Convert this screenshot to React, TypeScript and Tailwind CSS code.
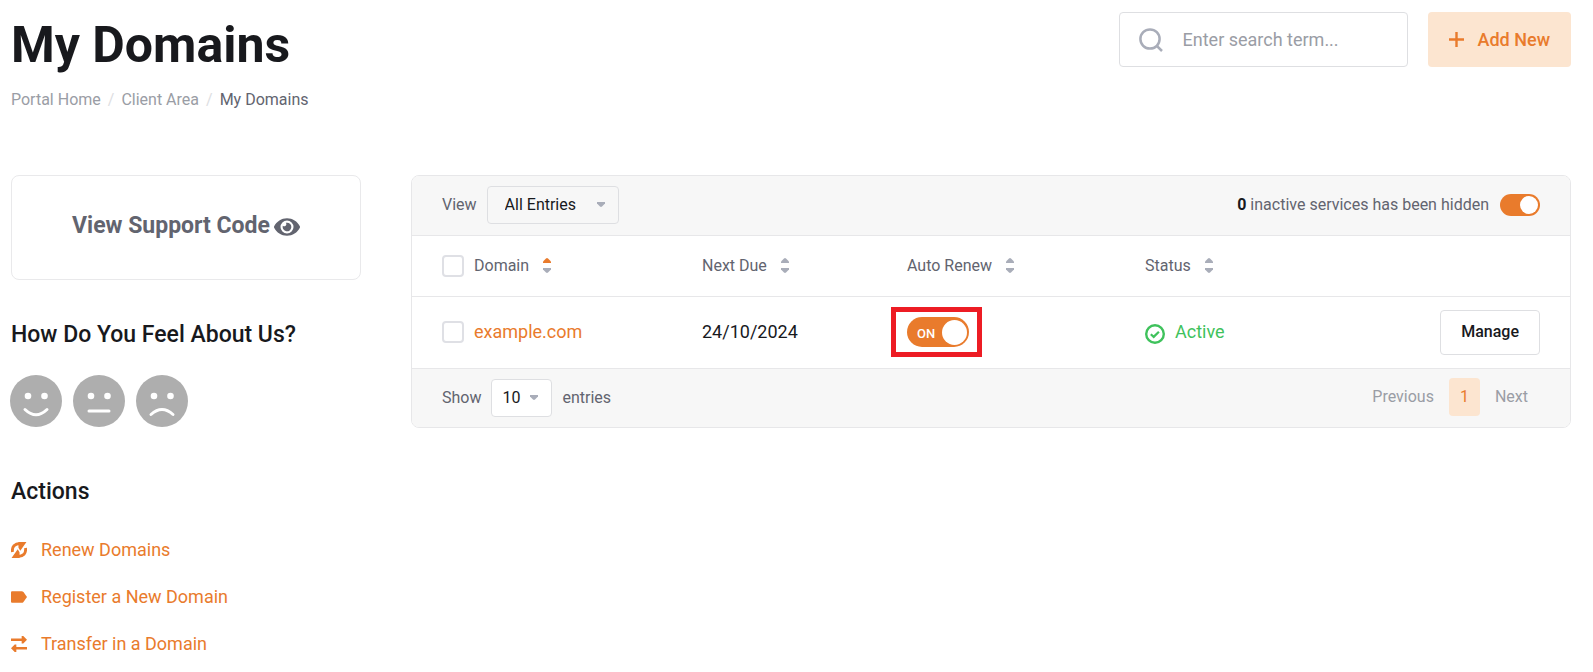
import { useState } from "react";
import { FaEye } from "react-icons/fa";

function Caret({ up = false, className = "" }: { up?: boolean; className?: string }) {
  return (
    <svg viewBox="0 0 8 5" className={`h-[5px] w-2 ${className}`} fill="currentColor" aria-hidden="true">
      {up ? <path d="M3 .4Q4-.3 5 .4L8 3.4V5H0V3.4Z" /> : <path d="M3 4.6Q4 5.3 5 4.6L8 1.6V0H0V1.6Z" />}
    </svg>
  );
}

function HeaderLabel({ label, sorted = false }: { label: string; sorted?: boolean }) {
  return (
    <button type="button" className="flex items-center gap-[14px] leading-6">
      {label}
      <span className="flex flex-col gap-[5px] text-[#a9adb9]">
        <Caret up className={sorted ? "text-[#e97b2c]" : ""} />
        <Caret />
      </span>
    </button>
  );
}

function Tick({ label }: { label: string }) {
  return (
    <input
      type="checkbox"
      aria-label={label}
      className="size-[22px] shrink-0 appearance-none rounded-[4px] border-2 border-[#dfe0e5] bg-white checked:bg-[#e97b2c]"
    />
  );
}

type Mood = { name: string; mouth: string };

const moods: Mood[] = [
  { name: "Happy", mouth: "M15 34.5Q26 45 37 34.5" },
  { name: "Neutral", mouth: "M16 36H36" },
  { name: "Unhappy", mouth: "M15 39.5Q26 29.5 37 39.5" },
];

const actions = [
  {
    label: "Renew Domains",
    icon: (
      <>
        <path d="M1.400 9.300C.7 4.500 3.500 1.500 8.500 1.400M13.600 5.700C14.300 10.500 11.500 13.500 6.500 13.600" fill="none" stroke="currentColor" strokeWidth="2.700" />
        <path d="M7 0H14.500L8.700 8.300 7 5.500ZM8 15H.5L6.300 6.700 8 9.500Z" />
      </>
    ),
  },
  { label: "Register a New Domain", icon: <path d="M1 2H10Q11 2 11.700 2.800L15 7.500 11.700 12.200Q11 13 10 13H1Q0 13 0 12V3Q0 2 1 2Z" /> },
  {
    label: "Transfer in a Domain",
    icon: <path d="M0 2.300H10V0H11.500L15 3.500 11.500 7H10V4.800H0ZM15 12.700H5V15H3.500L0 11.500 3.500 8H5V10.200H15Z" />,
  },
];

export default function App() {
  const [hideInactive, setHideInactive] = useState(true);
  const [autoRenew, setAutoRenew] = useState(true);

  return (
    <div className="bg-white pt-3 pr-[22px] pb-4 pl-[11px] font-[Roboto,sans-serif] text-base text-[#62646f]">
      <header className="flex items-start justify-between">
        <div>
          <h1 className="text-[50px] leading-[66px] font-bold text-[#18191d]">My Domains</h1>
          <nav aria-label="Breadcrumb" className="mt-[10px]">
            <ol className="flex gap-[7px] leading-6 text-[#9a9da5]">
              <li><a href="#home">Portal Home</a></li>
              <li className="text-[#dddee2]" aria-hidden="true">/</li>
              <li><a href="#client">Client Area</a></li>
              <li className="text-[#dddee2]" aria-hidden="true">/</li>
              <li className="text-[#62646f]">My Domains</li>
            </ol>
          </nav>
        </div>
        <div className="flex gap-5">
          <label className="flex h-[55px] w-[289px] items-center rounded-[4px] border border-[#dedfe2] pl-[19px]">
            <svg viewBox="0 0 24 24" className="size-6 shrink-0" fill="none" stroke="#a9adb9" strokeWidth="2.500" aria-hidden="true">
              <circle cx="11" cy="11" r="9.600" />
              <path d="m17.800 17.800 5.200 5.200" />
            </svg>
            <input
              type="text"
              aria-label="Search"
              placeholder="Enter search term..."
              className="ml-5 w-full min-w-0 text-lg outline-none placeholder:text-[#9a9da5]"
            />
          </label>
          <button type="button" className="flex h-[55px] items-center gap-[14px] rounded-[4px] bg-[#fce5d0] px-[21px] text-lg font-medium text-[#e97b2c]">
            <svg viewBox="0 0 15 15" className="size-[15px]" stroke="currentColor" strokeWidth="2.400" aria-hidden="true">
              <path d="M7.500 0V15M0 7.500H15" />
            </svg>
            Add New
          </button>
        </div>
      </header>

      <div className="mt-[63px] flex items-start gap-[50px]">
        <aside className="w-[350px] shrink-0">
          <button type="button" className="flex h-[105px] w-full items-center justify-center gap-1 rounded-[8px] border border-[#e9e9eb] pb-[2px] text-[23px] font-bold">
            View Support Code
            <FaEye className="size-[26px]" />
          </button>

          <h2 className="mt-[39px] text-[23px] leading-8 font-medium text-[#18191d]">How Do You Feel About Us?</h2>
          <div className="mt-6 -ml-px flex gap-[11px]">
            {moods.map((mood) => (
              <button key={mood.name} type="button" aria-label={mood.name}>
                <svg viewBox="0 0 52 52" className="size-[52px]" aria-hidden="true">
                  <circle cx="26" cy="26" r="26" fill="#aeaeae" />
                  <circle cx="18" cy="21" r="3.300" fill="#fff" />
                  <circle cx="34.500" cy="21" r="3.300" fill="#fff" />
                  <path d={mood.mouth} fill="none" stroke="#fff" strokeWidth="3" strokeLinecap="round" />
                </svg>
              </button>
            ))}
          </div>

          <h2 className="mt-[49px] text-[23px] leading-8 font-medium text-[#18191d]">Actions</h2>
          <ul className="mt-7 flex flex-col gap-5 text-lg text-[#e97b2c]">
            {actions.map((action) => (
              <li key={action.label}>
                <a href="#action" className="flex items-center gap-[14px] leading-[27px]">
                  <svg viewBox="0 0 15 15" className="size-4" fill="currentColor" aria-hidden="true">{action.icon}</svg>
                  {action.label}
                </a>
              </li>
            ))}
          </ul>
        </aside>

        <main className="min-w-0 flex-1 overflow-hidden rounded-[8px] border border-[#e7e7e9]">
          <div className="flex h-[60px] items-center justify-between border-b border-[#e7e7e9] bg-[#f7f7f7] px-[30px] pb-[2px]">
            <label className="flex items-center gap-[10px]">
              View
              <span className="relative flex items-center">
                <select className="h-[38px] w-[132px] appearance-none rounded-[4px] border border-[#dedfe2] pl-[17px] text-[#18191d]">
                  <option>All Entries</option>
                </select>
                <Caret className="pointer-events-none absolute right-[14px] text-[#a9adb9]" />
              </span>
            </label>
            <label className="flex items-center gap-[11px]">
              <span><b className="font-bold text-[#18191d]">0</b> inactive services has been hidden</span>
              <input
                type="checkbox"
                role="switch"
                checked={hideInactive}
                onChange={(e) => setHideInactive(e.target.checked)}
                className="flex h-[22px] w-10 appearance-none items-center rounded-full bg-[#a9adb9] px-[2px] before:size-[18px] before:rounded-full before:bg-white checked:justify-end checked:bg-[#e97b2c]"
              />
            </label>
          </div>

          <table className="w-full table-fixed text-left">
            <colgroup>
              <col className="w-[290px]" />
              <col className="w-[205px]" />
              <col className="w-[238px]" />
              <col />
              <col className="w-[150px]" />
            </colgroup>
            <thead>
              <tr className="h-[60px] border-b border-[#e7e7e9]">
                <th className="pl-[30px] font-normal">
                  <span className="flex items-center gap-[10px]">
                    <Tick label="Select all domains" />
                    <HeaderLabel label="Domain" sorted />
                  </span>
                </th>
                <th className="font-normal"><HeaderLabel label="Next Due" /></th>
                <th className="font-normal"><HeaderLabel label="Auto Renew" /></th>
                <th className="font-normal"><HeaderLabel label="Status" /></th>
                <td />
              </tr>
            </thead>
            <tbody>
              <tr className="h-[72px] border-b border-[#e7e7e9] text-lg">
                <td className="pl-[30px]">
                  <span className="flex items-center gap-[10px]">
                    <Tick label="Select example.com" />
                    <a href="#domain" className="text-[#e97b2c]">example.com</a>
                  </span>
                </td>
                <td className="text-[#18191d]">24/10/2024</td>
                <td>
                  <div className="-ml-4 flex h-[50px] w-[91px] items-center border-[5px] border-[#ed1c24] pl-[11px]">
                    <label className="relative flex items-center">
                      <input
                        type="checkbox"
                        role="switch"
                        aria-label="Auto renew"
                        checked={autoRenew}
                        onChange={(e) => setAutoRenew(e.target.checked)}
                        className="flex h-[30px] w-[62px] appearance-none items-center rounded-full bg-[#a9adb9] px-[2px] before:size-[25px] before:rounded-full before:bg-white checked:justify-end checked:bg-[#e97b2c]"
                      />
                      {autoRenew && <span className="absolute top-[7px] left-[10px] text-[13px] leading-5 font-medium text-white">ON</span>}
                    </label>
                  </div>
                </td>
                <td className="text-[#3fc25c]">
                  <span className="flex items-center gap-[10px]">
                    <svg viewBox="0 0 20 20" className="mt-1 size-5" fill="none" stroke="currentColor" aria-hidden="true">
                      <circle cx="10" cy="10" r="8.800" strokeWidth="2.400" />
                      <path d="m5.800 10.200 2.900 2.700 5.200-5.200" strokeWidth="2.200" />
                    </svg>
                    Active
                  </span>
                </td>
                <td className="pr-[30px]">
                  <button type="button" className="ml-auto block h-[45px] rounded-[4px] border border-[#dedfe2] px-5 text-base font-medium text-[#18191d]">
                    Manage
                  </button>
                </td>
              </tr>
            </tbody>
          </table>

          <footer className="flex h-[58px] items-center justify-between bg-[#f7f7f7] px-[30px]">
            <label className="flex items-center gap-[10px]">
              Show
              <span className="relative flex items-center">
                <select className="h-[38px] w-[61px] appearance-none rounded-[4px] border border-[#dedfe2] bg-white pl-[10px] text-[#18191d]">
                  <option>10</option>
                </select>
                <Caret className="pointer-events-none absolute right-[14px] text-[#a9adb9]" />
              </span>
              entries
            </label>
            <nav aria-label="Pagination" className="flex items-center gap-[15px] pr-3 pb-[2px] text-[#9a9da5]">
              <button type="button">Previous</button>
              <button type="button" aria-current="page" className="h-[38px] w-[31px] rounded-[4px] bg-[#fce5d0] text-[#e97b2c]">1</button>
              <button type="button">Next</button>
            </nav>
          </footer>
        </main>
      </div>
    </div>
  );
}
